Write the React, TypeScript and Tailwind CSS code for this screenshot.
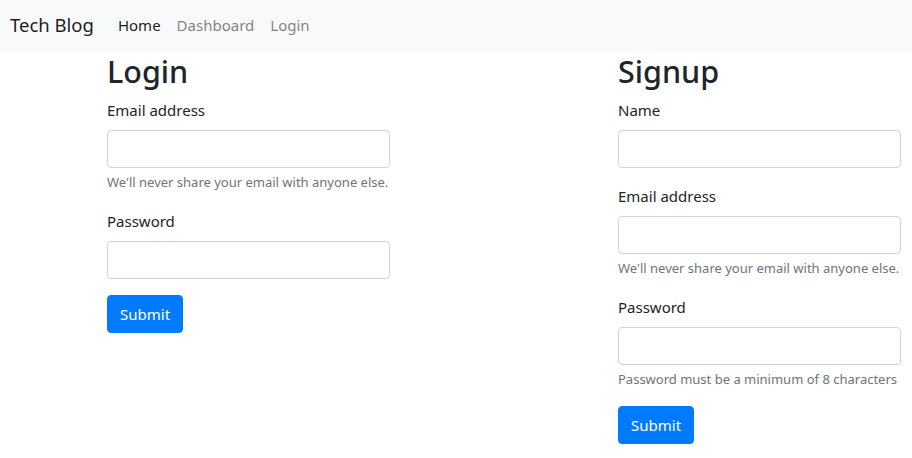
const font = { fontFamily: '"Noto Sans", "Liberation Sans", sans-serif' };

function Field({ label, help, type = 'text' }: { label: string; help?: string; type?: string }) {
  return (
    <div className="mb-4">
      <label className="block text-[15px] leading-6 mb-2 text-[#212529]">{label}</label>
      <input
        type={type}
        className="block w-full h-[38px] px-3 border border-[#ced4da] rounded-[4px] bg-white outline-none"
      />
      {help && <small className="block mt-1 text-[13px] leading-[21px] text-[#6c757d]">{help}</small>}
    </div>
  );
}

function SubmitButton() {
  return (
    <button className="h-[38px] px-3 rounded-[4px] bg-[#007bff] text-white text-[15px] leading-6 border border-[#007bff]">
      Submit
    </button>
  );
}

export default function App() {
  return (
    <div className="min-h-screen bg-white text-[#212529]" style={font}>
      {/* Navbar */}
      <nav className="h-[52px] bg-[#f8f9fa] flex items-center pl-[10px] pb-[3px]">
        <span className="text-[18.5px] leading-[30px] text-black/90 mr-4">Tech Blog</span>
        <ul className="flex">
          <li className="px-2 text-[15px] leading-6 text-black/90">Home</li>
          <li className="px-2 text-[15px] leading-6 text-black/50">Dashboard</li>
          <li className="px-2 text-[15px] leading-6 text-black/50">Login</li>
        </ul>
      </nav>

      <div className="flex pl-[107px]">
        <div className="w-[283px]">
          <h2 className="text-[30.5px] leading-[38.4px] font-medium mb-2">Login</h2>
          <form>
            <Field label="Email address" type="email" help="We'll never share your email with anyone else." />
            <Field label="Password" type="password" />
            <SubmitButton />
          </form>
        </div>

        <div className="w-[283px] ml-[228px]">
          <h2 className="text-[30.5px] leading-[38.4px] font-medium mb-2">Signup</h2>
          <form>
            <Field label="Name" />
            <Field label="Email address" type="email" help="We'll never share your email with anyone else." />
            <Field label="Password" type="password" help="Password must be a minimum of 8 characters" />
            <SubmitButton />
          </form>
        </div>
      </div>
    </div>
  );
}
